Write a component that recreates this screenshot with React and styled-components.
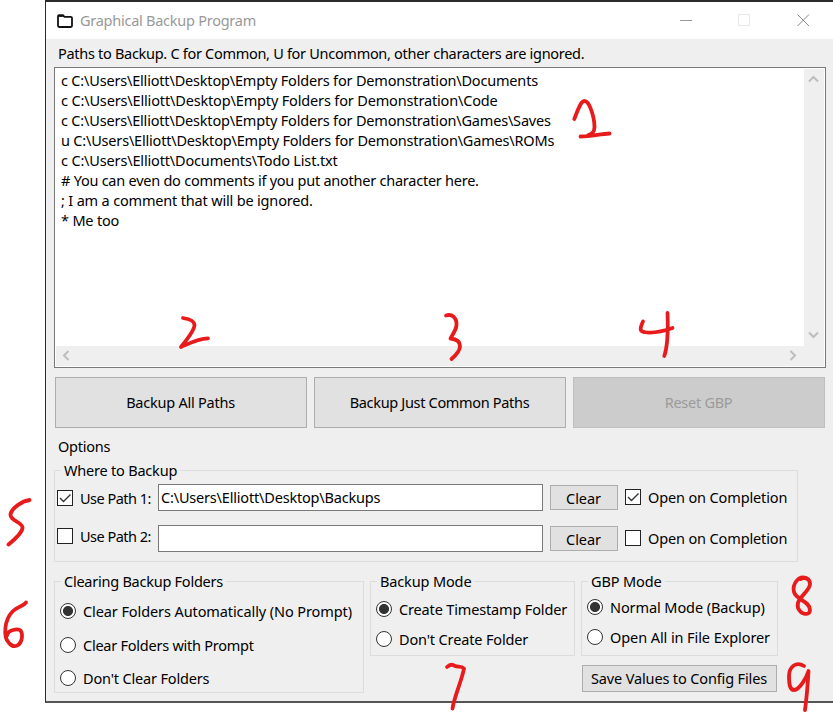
import React, { useState } from "react";
import styled, { createGlobalStyle } from "styled-components";

const GlobalStyle = createGlobalStyle`
  * { box-sizing: border-box; }
  body {
    margin: 0;
    background: #fff;
    color: #000;
    font: 14.5px/20px "Noto Sans", "Open Sans", sans-serif;
    overflow: hidden;
  }
`;

const Page = styled.div`
  position: relative;
  width: 833px;
  height: 712px;
  padding-left: 45px;
  overflow: hidden;
`;

const Window = styled.main`
  display: flex;
  flex-direction: column;
  height: 703px;
  background: #efefef;
  border: solid #2c2a2b;
  border-width: 2px 0 0 1px;
  border-bottom: 2px solid #555;
`;

const TitleBar = styled.header`
  display: flex;
  align-items: center;
  height: 37px;
  padding: 0 23px 0 10px;
  background: #fff;
  color: #999;
`;

const Text = styled.span`
  display: block;
  white-space: pre;
  letter-spacing: ${(p) => (p.$track ?? 0.1) - 0.265}px;
`;

const AppTitle = styled(Text)`
  flex: 1;
  margin-left: 6px;
  padding-bottom: 2px;
`;

const Controls = styled.div`
  display: flex;
  gap: 46px;
  margin-top: -1px;
`;

const Glyph = styled.svg`
  display: block;
  flex: none;
  fill: none;
`;

const Content = styled.div`
  display: flex;
  flex-direction: column;
  padding: 4px 7px 0 8px;
`;

const Heading = styled(Text)`
  margin-left: 4px;
`;

const Editor = styled.section`
  display: grid;
  grid-template: 277px 20px / 1fr 20px;
  height: 301px;
  width: 772px;
  margin-top: 4px;
  padding: 1px;
  background: #fff;
  border: 1px solid #7a7a7a;
`;

const Lines = styled.div`
  padding: 1px 0 0 5px;
`;

const ScrollBar = styled.div`
  display: flex;
  flex-direction: ${(p) => (p.$vertical ? "column" : "row")};
  justify-content: space-between;
  align-items: flex-start;
  padding: ${(p) => (p.$vertical ? "4px 3px 5px" : "3px 5px 0 4px")};
  background: #efefef;
`;

const Corner = styled.div`
  background: #efefef;
`;

const Actions = styled.div`
  display: grid;
  grid-template-columns: repeat(3, 252px);
  gap: 7px;
  margin: 9px 0 8px 1px;
`;

const Button = styled.button`
  display: flex;
  align-items: center;
  justify-content: center;
  width: ${(p) => p.$w || 252}px;
  height: ${(p) => p.$h || 51}px;
  padding: 0 1px ${(p) => p.$lift ?? 2}px 0;
  font: inherit;
  color: #000;
  background: #e1e1e1;
  border: 1px solid #adadad;
  &:disabled {
    color: #9b9b9b;
    background: #ccc;
    border-color: #bfbfbf;
  }
`;

const Group = styled.fieldset`
  width: ${(p) => p.$w}px;
  height: ${(p) => p.$h}px;
  margin: ${(p) => p.$top || 0}px 0 0;
  padding: 0 0 0 ${(p) => p.$inset}px;
  min-width: 0;
  border: 1px solid #dcdcdc;
`;

const Legend = styled.legend`
  margin-left: ${(p) => 6 - p.$inset}px;
  padding: 0 3px;
`;

const PathRow = styled.div`
  display: grid;
  grid-template-columns: 101px 385px 75px auto;
  align-items: start;
  height: 41px;
  margin-top: ${(p) => p.$top || 0}px;
`;

const Field = styled.input`
  width: 385px;
  height: 27px;
  padding: 0 2px 1px;
  font: inherit;
  letter-spacing: -0.185px;
  color: #000;
  background: #fff;
  border: 1px solid #7a7a7a;
  border-radius: 0;
  outline: none;
`;

const ClearSlot = styled.div`
  display: flex;
  padding: 1px 0 0 7px;
`;

const Choice = styled.label`
  display: flex;
  align-items: center;
  gap: 7px;
  height: 20px;
  margin-top: ${(p) => p.$top || 0}px;
  margin-left: ${(p) => p.$left || 0}px;
`;

const HiddenInput = styled.input`
  position: absolute;
  opacity: 0;
  pointer-events: none;
`;

const Box = styled.span`
  display: flex;
  flex: none;
  width: 16px;
  height: 16px;
  background: #fff;
  border: 1px solid #222;
`;

const Dot = styled.span`
  flex: none;
  width: 16px;
  height: 16px;
  border: 1px solid #333;
  border-radius: 50%;
  background: ${(p) => (p.$on ? "radial-gradient(circle, #333 4.6px, #fff 5.4px)" : "#fff")};
`;

const Panels = styled.div`
  display: flex;
  align-items: flex-start;
  gap: 6px;
  margin-top: 9px;
`;

const Side = styled.div`
  display: flex;
  flex-direction: column;
`;

const SaveRow = styled.div`
  padding: 9px 0 0 1px;
`;

const Ink = styled.svg`
  position: absolute;
  inset: 0;
  pointer-events: none;
  fill: none;
  stroke: #e81b1c;
  stroke-width: 3.8;
  stroke-linecap: round;
  stroke-linejoin: round;
`;

const CHEVRONS = {
  up: "M2 8.5 6.5 4 11 8.5",
  down: "M2 4.5 6.5 9 11 4.5",
  left: "M8.5 2 4 6.5 8.5 11",
  right: "M4.5 2 9 6.5 4.5 11",
};

const Chevron = ({ dir }) => (
  <Glyph width="13" height="13" stroke="#bdbdbd" strokeWidth="2">
    <path d={CHEVRONS[dir]} />
  </Glyph>
);

const LINES = [
  ["c C:\\Users\\Elliott\\Desktop\\Empty Folders for Demonstration\\Documents", 0.08],
  ["c C:\\Users\\Elliott\\Desktop\\Empty Folders for Demonstration\\Code", 0.11],
  ["c C:\\Users\\Elliott\\Desktop\\Empty Folders for Demonstration\\Games\\Saves", 0.08],
  ["u C:\\Users\\Elliott\\Desktop\\Empty Folders for Demonstration\\Games\\ROMs", 0.07],
  ["c C:\\Users\\Elliott\\Documents\\Todo List.txt", 0.1],
  ["# You can even do comments if you put another character here.", 0.02],
  ["; I am a comment that will be ignored.", 0.09],
  ["* Me too", 0.08],
];

const MARKS = [
  "M574.3 119C578 109 581 101 584.5 101C590 101 594.5 119 594.5 127C594.5 133 591 134 588 135.3M580.5 136.5C591 136.5 600 134 609.5 133.5",
  "M183 318C189 319 194.500 321 194.500 325C194.500 331 184 343 181 347C190 343 198 338.500 208 338.300",
  "M446 315.5C452 313.500 457 318 456.500 325C456 331 452 335 450.500 338.500C455 339 460 341 460 346C460 351 455 356 451.500 359",
  "M643 321.500C640 328 639.500 331.500 644 332C652 333.500 664 331 672.500 328M667.500 313C668 325 668 345 664.300 356",
  "M29.500 500C22 501 12 508 10.500 514C9.500 521 23 522 22.500 528C22 533 14 540 8.500 544.500",
  "M26 602.500C24 606 18 606 13 611C4 620 3 637 9 643C14 649 21 646 22 637C22.500 629 18 628.500 13 630C9 631 7.500 633 7 635.500",
  "M447 667C450 664 453 664.500 455 666C458 667.500 461 665.500 464 668.500C462 680 454 697 452.500 708.500",
  "M807 579C799 574 792 584 794 592C796 600 810 601 810 610C810 616 801 615 798 608C795 598 810 592 810 584C810 579 805 576 801 579",
  "M804 666C796 661 789 667 789 676C789 685 790 690 794 690C800 690 807 676 808.500 671C808 680 807 695 805 710",
];

function Check({ children, track, checked, top, left }) {
  const [on, setOn] = useState(!!checked);
  return (
    <Choice $top={top} $left={left}>
      <HiddenInput type="checkbox" checked={on} onChange={() => setOn(!on)} />
      <Box>
        {on && (
          <Glyph width="14" height="14" stroke="#333" strokeWidth="1.4">
            <path d="M2 7 5.500 10.500 12.500 3.500" />
          </Glyph>
        )}
      </Box>
      <Text $track={track}>{children}</Text>
    </Choice>
  );
}

function Radios({ name, options }) {
  const [picked, setPicked] = useState(0);
  return options.map(([label, track, top], i) => (
    <Choice key={label} $top={top}>
      <HiddenInput type="radio" name={name} checked={picked === i} onChange={() => setPicked(i)} />
      <Dot $on={picked === i} />
      <Text $track={track}>{label}</Text>
    </Choice>
  ));
}

function BackupPath({ label, initial, checked, top, labelTop }) {
  const [value, setValue] = useState(initial);
  return (
    <PathRow $top={top}>
      <Check checked={checked} track={-0.24} top={labelTop}>{label}</Check>
      <Field value={value} onChange={(e) => setValue(e.target.value)} spellCheck={false} />
      <ClearSlot>
        <Button $w={68} $h={25} $lift={0} onClick={() => setValue("")}>
          <Text $track={0.2}>Clear</Text>
        </Button>
      </ClearSlot>
      <Check checked={checked} track={0.13} top={3} left={7}>Open on Completion</Check>
    </PathRow>
  );
}

export default function App() {
  return (
    <Page>
      <GlobalStyle />
      <Window>
        <TitleBar>
          <Glyph width="18" height="16" stroke="#111" strokeWidth="1.8">
            <path d="M2 3.200V12.800Q2 14 3.200 14H14.800Q16 14 16 12.800V5Q16 3.800 14.800 3.800H8.500L7 2.200H3Q2 2.200 2 3.200Z" />
            <path d="M2 3H8" />
          </Glyph>
          <AppTitle $track={0.01}>Graphical Backup Program</AppTitle>
          <Controls>
            <Glyph width="13" height="13" stroke="#999"><path d="M1 6.500H13" /></Glyph>
            <Glyph width="13" height="13" stroke="#e8e8e8"><path d="M.5 .5H11.500V11.500H.5Z" /></Glyph>
            <Glyph width="13" height="13" stroke="#888"><path d="M.5 .5 12 12M12 .5 .5 12" /></Glyph>
          </Controls>
        </TitleBar>
        <Content>
          <Heading $track={-0.03}>
            Paths to Backup. C for Common, U for Uncommon, other characters are ignored.
          </Heading>
          <Editor>
            <Lines>
              {LINES.map(([line, track]) => <Text key={line} $track={track}>{line}</Text>)}
            </Lines>
            <ScrollBar $vertical><Chevron dir="up" /><Chevron dir="down" /></ScrollBar>
            <ScrollBar><Chevron dir="left" /><Chevron dir="right" /></ScrollBar>
            <Corner />
          </Editor>
          <Actions>
            <Button><Text $track={0.03}>Backup All Paths</Text></Button>
            <Button><Text $track={-0.06}>Backup Just Common Paths</Text></Button>
            <Button disabled><Text $track={0.0}>Reset GBP</Text></Button>
          </Actions>
          <Heading $track={0.02}>Options</Heading>
          <Group $w={744} $h={102} $inset={2} $top={4}>
            <Legend $inset={2}><Text $track={0.06}>Where to Backup</Text></Legend>
            <BackupPath label="Use Path 1:" initial={"C:\\Users\\Elliott\\Desktop\\Backups"} checked top={4} labelTop={4} />
            <BackupPath label="Use Path 2:" initial="" labelTop={1} />
          </Group>
          <Panels>
            <Group $w={310} $h={122} $inset={5}>
              <Legend $inset={5}><Text $track={0.02}>Clearing Backup Folders</Text></Legend>
              <Radios
                name="clearing"
                options={[
                  ["Clear Folders Automatically (No Prompt)", 0.17, 10],
                  ["Clear Folders with Prompt", 0.02, 14],
                  ["Don't Clear Folders", 0.1, 13],
                ]}
              />
            </Group>
            <Group $w={205} $h={85} $inset={5}>
              <Legend $inset={5}><Text $track={0.13}>Backup Mode</Text></Legend>
              <Radios
                name="backup"
                options={[
                  ["Create Timestamp Folder", 0.11, 8],
                  ["Don't Create Folder", 0.12, 10],
                ]}
              />
            </Group>
            <Side>
              <Group $w={197} $h={85} $inset={5}>
                <Legend $inset={5}><Text $track={0.14}>GBP Mode</Text></Legend>
                <Radios
                  name="gbp"
                  options={[
                    ["Normal Mode (Backup)", 0.17, 6],
                    ["Open All in File Explorer", 0.18, 10],
                  ]}
                />
              </Group>
              <SaveRow>
                <Button $w={195} $h={27}><Text $track={0.13}>Save Values to Config Files</Text></Button>
              </SaveRow>
            </Side>
          </Panels>
        </Content>
      </Window>
      <Ink width="833" height="712">
        {MARKS.map((d) => <path key={d} d={d} />)}
      </Ink>
    </Page>
  );
}
